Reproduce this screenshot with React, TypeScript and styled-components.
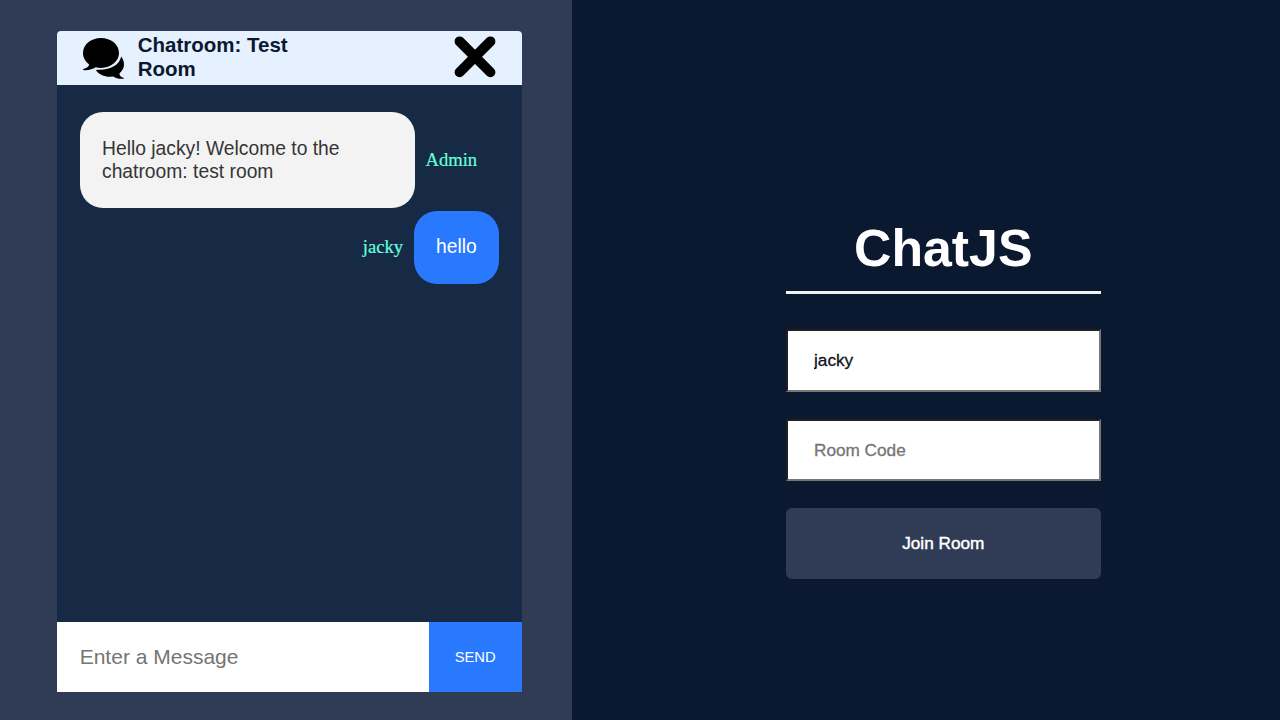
import React from "react";
import styled, { createGlobalStyle } from "styled-components";

const GlobalStyle = createGlobalStyle`
  * { box-sizing: border-box; }
  body { margin: 0; font-family: "Liberation Sans", Arial, sans-serif; }
`;

const Page = styled.main`
  display: flex;
  width: 1280px;
  height: 720px;
  overflow: hidden;
  background: #0a192f;
`;

const ChatSide = styled.section`
  width: 572px;
  padding: 30.5px 50.3px 27.5px 56.7px;
  background: #303c55;
`;

const ChatPanel = styled.div`
  display: flex;
  flex-direction: column;
  height: 661.8px;
  background: #172a45;
  border-radius: 4px 4px 0 0;
  overflow: hidden;
`;

const ChatHeader = styled.header`
  display: flex;
  align-items: flex-start;
  height: 54.8px;
  padding: 0 25.5px 0 25px;
  background: #e6f1ff;
`;

const BubblesIcon = styled.svg`
  width: 43px;
  height: 43px;
  margin-top: 6.5px;
`;

const CloseIcon = styled.svg`
  width: 42px;
  height: 42px;
  margin: 5px 0 0 auto;
`;

const RoomTitle = styled.h2`
  width: 190px;
  margin: 2.4px 0 0 13px;
  color: #0a192f;
  font-size: 20.5px;
  line-height: 24px;
`;

const Messages = styled.div`
  flex: 1;
  display: flex;
  flex-direction: column;
  gap: 3px;
  padding: 26.7px 23px 26.7px 23.3px;
`;

const MessageRow = styled.div<{ $own?: boolean }>`
  display: flex;
  align-items: center;
  justify-content: ${(p) => (p.$own ? "flex-end" : "flex-start")};
  gap: ${(p) => (p.$own ? "11px" : "10.5px")};
`;

const Bubble = styled.p<{ $own?: boolean }>`
  width: ${(p) => (p.$own ? "84.7px" : "335px")};
  height: ${(p) => (p.$own ? "73px" : "96px")};
  margin: 0;
  padding: ${(p) => (p.$own ? "24px" : "24.7px")} 22px 0;
  border-radius: 23px;
  background: ${(p) => (p.$own ? "#2979ff" : "#f3f3f3")};
  color: ${(p) => (p.$own ? "#fff" : "#353535")};
  font-size: 19.3px;
  line-height: 23.4px;
`;

const Sender = styled.span`
  color: #64ffda;
  font-family: "Liberation Serif", "Times New Roman", serif;
  font-size: 18.6px;
  -webkit-text-stroke: 0.2px;
`;

const Composer = styled.form`
  display: flex;
  height: 70px;
`;

const MessageInput = styled.input`
  width: 372px;
  padding: 0 23px;
  border: 0;
  border-radius: 0;
  background: #fff;
  font: 21px "Liberation Sans", Arial, sans-serif;
  &::placeholder { color: #757575; }
`;

const SendButton = styled.button`
  flex: 1;
  padding: 0;
  border: 0;
  background: #2979ff;
  color: #fff;
  font: 14.8px "Liberation Sans", Arial, sans-serif;
`;

const JoinSide = styled.section`
  flex: 1;
  padding: 218px 179.5px 0 214px;
`;

const JoinForm = styled.form`
  display: flex;
  flex-direction: column;
`;

const Brand = styled.h1`
  height: 76px;
  margin: 0 0 35.4px;
  border-bottom: 3px solid #f1f2f4;
  color: #fff;
  font-size: 51.8px;
  line-height: 61px;
  text-align: center;
`;

const Field = styled.input`
  height: 62.7px;
  margin-bottom: 26.7px;
  padding: 0 26px;
  border: 2px solid;
  border-color: #202020 #767676 #767676 #202020;
  border-radius: 0;
  background: #fff;
  color: #101020;
  font: 17.2px "Liberation Sans", Arial, sans-serif;
  -webkit-text-stroke: 0.3px;
  &::placeholder { color: #757575; }
`;

const JoinButton = styled.button`
  height: 71px;
  padding: 0;
  border: 0;
  border-radius: 6px;
  background: #303c55;
  color: #fff;
  font: 17.2px "Liberation Sans", Arial, sans-serif;
  -webkit-text-stroke: 0.45px;
`;

export default function App() {
  return (
    <Page>
      <GlobalStyle />
      <ChatSide>
        <ChatPanel>
          <ChatHeader>
            <BubblesIcon viewBox="0 0 43 43">
              <path d="M19 1C9 1 1 7.6 1 16C1 20.6 3.3 24.6 7.1 27.3C7 29.8 4.5 31.4 1.3 32.1C.7 32.3.8 33 1.4 33.1C6 33.8 10.5 32.3 13.7 30.3C15.4 30.7 17.2 30.9 19 30.9C29 30.9 37 24.3 37 16C37 7.6 29 1 19 1Z" />
              <path d="M39.2 19.6C41.2 22 42 25 42 27.8C42 31.3 40 34.2 37.4 36.4C37.6 38.5 39 40 41.5 40.7C42.2 40.9 42.1 41.6 41.4 41.7C37.5 42.3 34 41.3 31.2 39.5C24.4 40.7 17.2 38.2 13.8 33C15 32.8 16.5 32.8 18 32.8C28.5 32.8 37.4 28.3 39.2 19.6Z" />
            </BubblesIcon>
            <RoomTitle>Chatroom: Test Room</RoomTitle>
            <CloseIcon viewBox="0 0 42 42">
              <path d="M5.6 5.4L36.4 36.2M36.4 5.4L5.6 36.2" fill="none" stroke="#000" strokeWidth="10" strokeLinecap="round" />
            </CloseIcon>
          </ChatHeader>
          <Messages>
            <MessageRow>
              <Bubble>Hello jacky! Welcome to the chatroom: test room</Bubble>
              <Sender>Admin</Sender>
            </MessageRow>
            <MessageRow $own>
              <Sender>jacky</Sender>
              <Bubble $own>hello</Bubble>
            </MessageRow>
          </Messages>
          <Composer>
            <MessageInput placeholder="Enter a Message" />
            <SendButton type="button">SEND</SendButton>
          </Composer>
        </ChatPanel>
      </ChatSide>
      <JoinSide>
        <JoinForm>
          <Brand>ChatJS</Brand>
          <Field defaultValue="jacky" />
          <Field placeholder="Room Code" />
          <JoinButton type="button">Join Room</JoinButton>
        </JoinForm>
      </JoinSide>
    </Page>
  );
}
